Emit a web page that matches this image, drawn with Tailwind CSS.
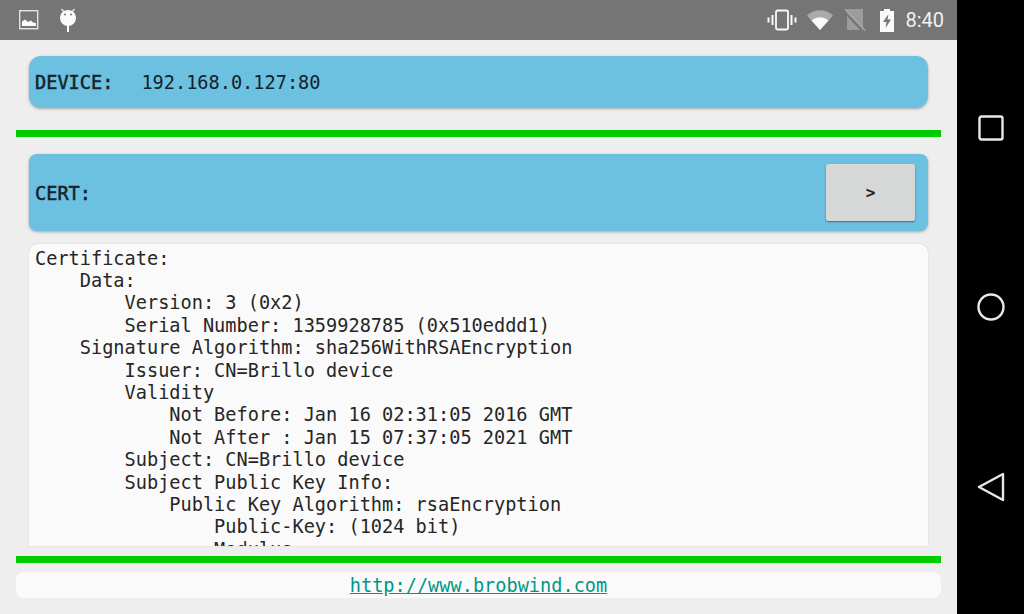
<!DOCTYPE html>
<html lang="en">
<head>
    <meta charset="UTF-8">
    <title>Brillo Cert</title>
    <script src="https://cdn.jsdelivr.net/npm/@tailwindcss/browser@4"></script>
</head>
<body class="bg-black font-['DejaVu_Sans_Mono',monospace] overflow-hidden">
    <div class="flex w-[1024px] h-[614px]">

        <!-- App area -->
        <div class="w-[957px] h-full flex flex-col bg-[#eeeeee]">

            <!-- Status bar -->
            <div class="h-10 bg-[#757575] flex items-center pl-[19px] pr-[13px] shrink-0">
                <svg class="w-[20px] h-[20px]" viewBox="0 0 20 20" fill="none">
                    <rect x=".7" y=".7" width="18" height="18" stroke="#e4e4e4" stroke-width="1.400"/>
                    <path d="M3 16v-4.500l3-2 3 2.500 3-1.500 2 2 3 .5v3z" fill="#fafafa"/>
                </svg>
                <svg class="w-[20px] h-[26px] ml-[19px]" viewBox="0 0 20 26">
                    <path d="M3.500 2l2.500 3M16.500 2l-2.500 3" stroke="#f0f0f0" stroke-width="1.200"/>
                    <circle cx="10" cy="11" r="8" fill="#fafafa"/>
                    <rect x="9" y="18" width="2" height="7" fill="#fafafa"/>
                    <circle cx="7" cy="7.500" r="1" fill="#757575"/>
                    <circle cx="13" cy="7.500" r="1" fill="#757575"/>
                </svg>
                <div class="ml-auto flex items-center">
                    <svg class="w-[30px] h-[22px]" viewBox="0 0 30 22" fill="none" stroke="#fafafa">
                        <rect x="9" y="1.500" width="12" height="19" rx="1.500" stroke-width="1.800"/>
                        <path d="M5.500 6v10M1.500 8.500v5M24.500 6v10M28.500 8.500v5" stroke-width="2"/>
                    </svg>
                    <svg class="w-[28px] h-[22px] ml-[9px]" viewBox="0 0 28 22">
                        <path d="M1 6.500C8 -.5 20 -.5 27 6.500L14 21z" fill="#fafafa" fill-opacity=".4"/>
                        <path d="M5.500 11.500c5-4.500 12-4.500 17 0L14 21z" fill="#fafafa"/>
                    </svg>
                    <svg class="w-[22px] h-[24px] ml-[10px]" viewBox="0 0 22 24">
                        <path d="M3 1h16v20L3 5z" fill="#fafafa" fill-opacity=".3"/>
                        <path d="M3 8l13 14H3z" fill="#fafafa" fill-opacity=".3"/>
                        <path d="M1 1l20 21.500" stroke="#a8a8a8" stroke-width="1.500"/>
                    </svg>
                    <svg class="w-[16px] h-[24px] ml-[13px]" viewBox="0 0 16 24">
                        <path d="M5 1h6v2h4v21H1V3h4z" fill="#fafafa"/>
                        <path d="M9.500 6L4 14h3.500l-1 6L12 11.500H8.500z" fill="#757575"/>
                    </svg>
                    <span class="ml-[10px] font-['Roboto',sans-serif] text-[20px] leading-none text-[#f2f2f2]">8:40</span>
                </div>
            </div>

            <!-- Content -->
            <div class="flex-1 flex flex-col px-4 min-h-0">
                <div class="mx-[13px] mt-4 h-[52px] shrink-0 flex items-center px-[6px] pt-[2px] rounded-xl bg-[#6cc1e0] shadow-[0_1px_3px_rgba(0,0,0,.3)] text-[18.6px] text-[#14222b]">
                    <span class="[-webkit-text-stroke:0.5px_#14222b]">DEVICE:</span>
                    <span class="ml-[28px]">192.168.0.127:80</span>
                </div>

                <div class="mt-[22px] h-[6.500px] shrink-0 bg-[#00cc00]"></div>

                <div class="mx-[13px] mt-[17.500px] h-[77px] shrink-0 flex items-center justify-between pl-[6px] pr-[13px] rounded-lg bg-[#6cc1e0] shadow-[0_1px_3px_rgba(0,0,0,.3)] text-[18.6px] text-[#14222b]">
                    <span class="pt-[2px] [-webkit-text-stroke:0.5px_#14222b]">CERT:</span>
                    <button class="w-[89px] h-[57px] rounded-[2px] bg-[#d6d7d7] shadow-[0_1px_2px_rgba(0,0,0,.45)] text-[16px] font-bold text-[#222]">&gt;</button>
                </div>

                <pre class="mx-[13px] mt-[13px] h-[302px] shrink-0 overflow-hidden rounded-t-lg bg-[#fafafa] shadow-[0_0_1px_rgba(0,0,0,.3)] pl-[6px] pt-[3.500px] font-['DejaVu_Sans_Mono',monospace] text-[18.6px] leading-[22.4px] text-[#262626]">Certificate:
    Data:
        Version: 3 (0x2)
        Serial Number: 1359928785 (0x510eddd1)
    Signature Algorithm: sha256WithRSAEncryption
        Issuer: CN=Brillo device
        Validity
            Not Before: Jan 16 02:31:05 2016 GMT
            Not After : Jan 15 07:37:05 2021 GMT
        Subject: CN=Brillo device
        Subject Public Key Info:
            Public Key Algorithm: rsaEncryption
                Public-Key: (1024 bit)
                Modulus:</pre>

                <div class="mt-[10px] h-[6.500px] shrink-0 bg-[#00cc00]"></div>

                <div class="mt-[9.500px] h-[26px] shrink-0 flex items-center justify-center pt-[2px] rounded-lg bg-[#fafafa]">
                    <a href="#" class="text-[18.6px] text-[#009688] underline">http://www.brobwind.com</a>
                </div>
            </div>
        </div>

        <!-- Navigation bar -->
        <div class="w-[67px] h-full bg-black flex flex-col items-center pt-[115px]">
            <svg class="w-[26px] h-[26px]" viewBox="0 0 26 26" fill="none" stroke="#e8e8e8" stroke-width="2.400">
                <rect x="1.500" y="1.500" width="23" height="23" rx="2"/>
            </svg>
            <svg class="w-[28px] h-[28px] mt-[152px]" viewBox="0 0 28 28" fill="none" stroke="#e8e8e8" stroke-width="2.400">
                <circle cx="14" cy="14" r="12.500"/>
            </svg>
            <svg class="w-[28px] h-[30px] mt-[151px]" viewBox="0 0 28 30" fill="none" stroke="#e8e8e8" stroke-width="2.400" stroke-linejoin="round">
                <path d="M26 2v26L2 15z"/>
            </svg>
        </div>
    </div>
</body>
</html>
